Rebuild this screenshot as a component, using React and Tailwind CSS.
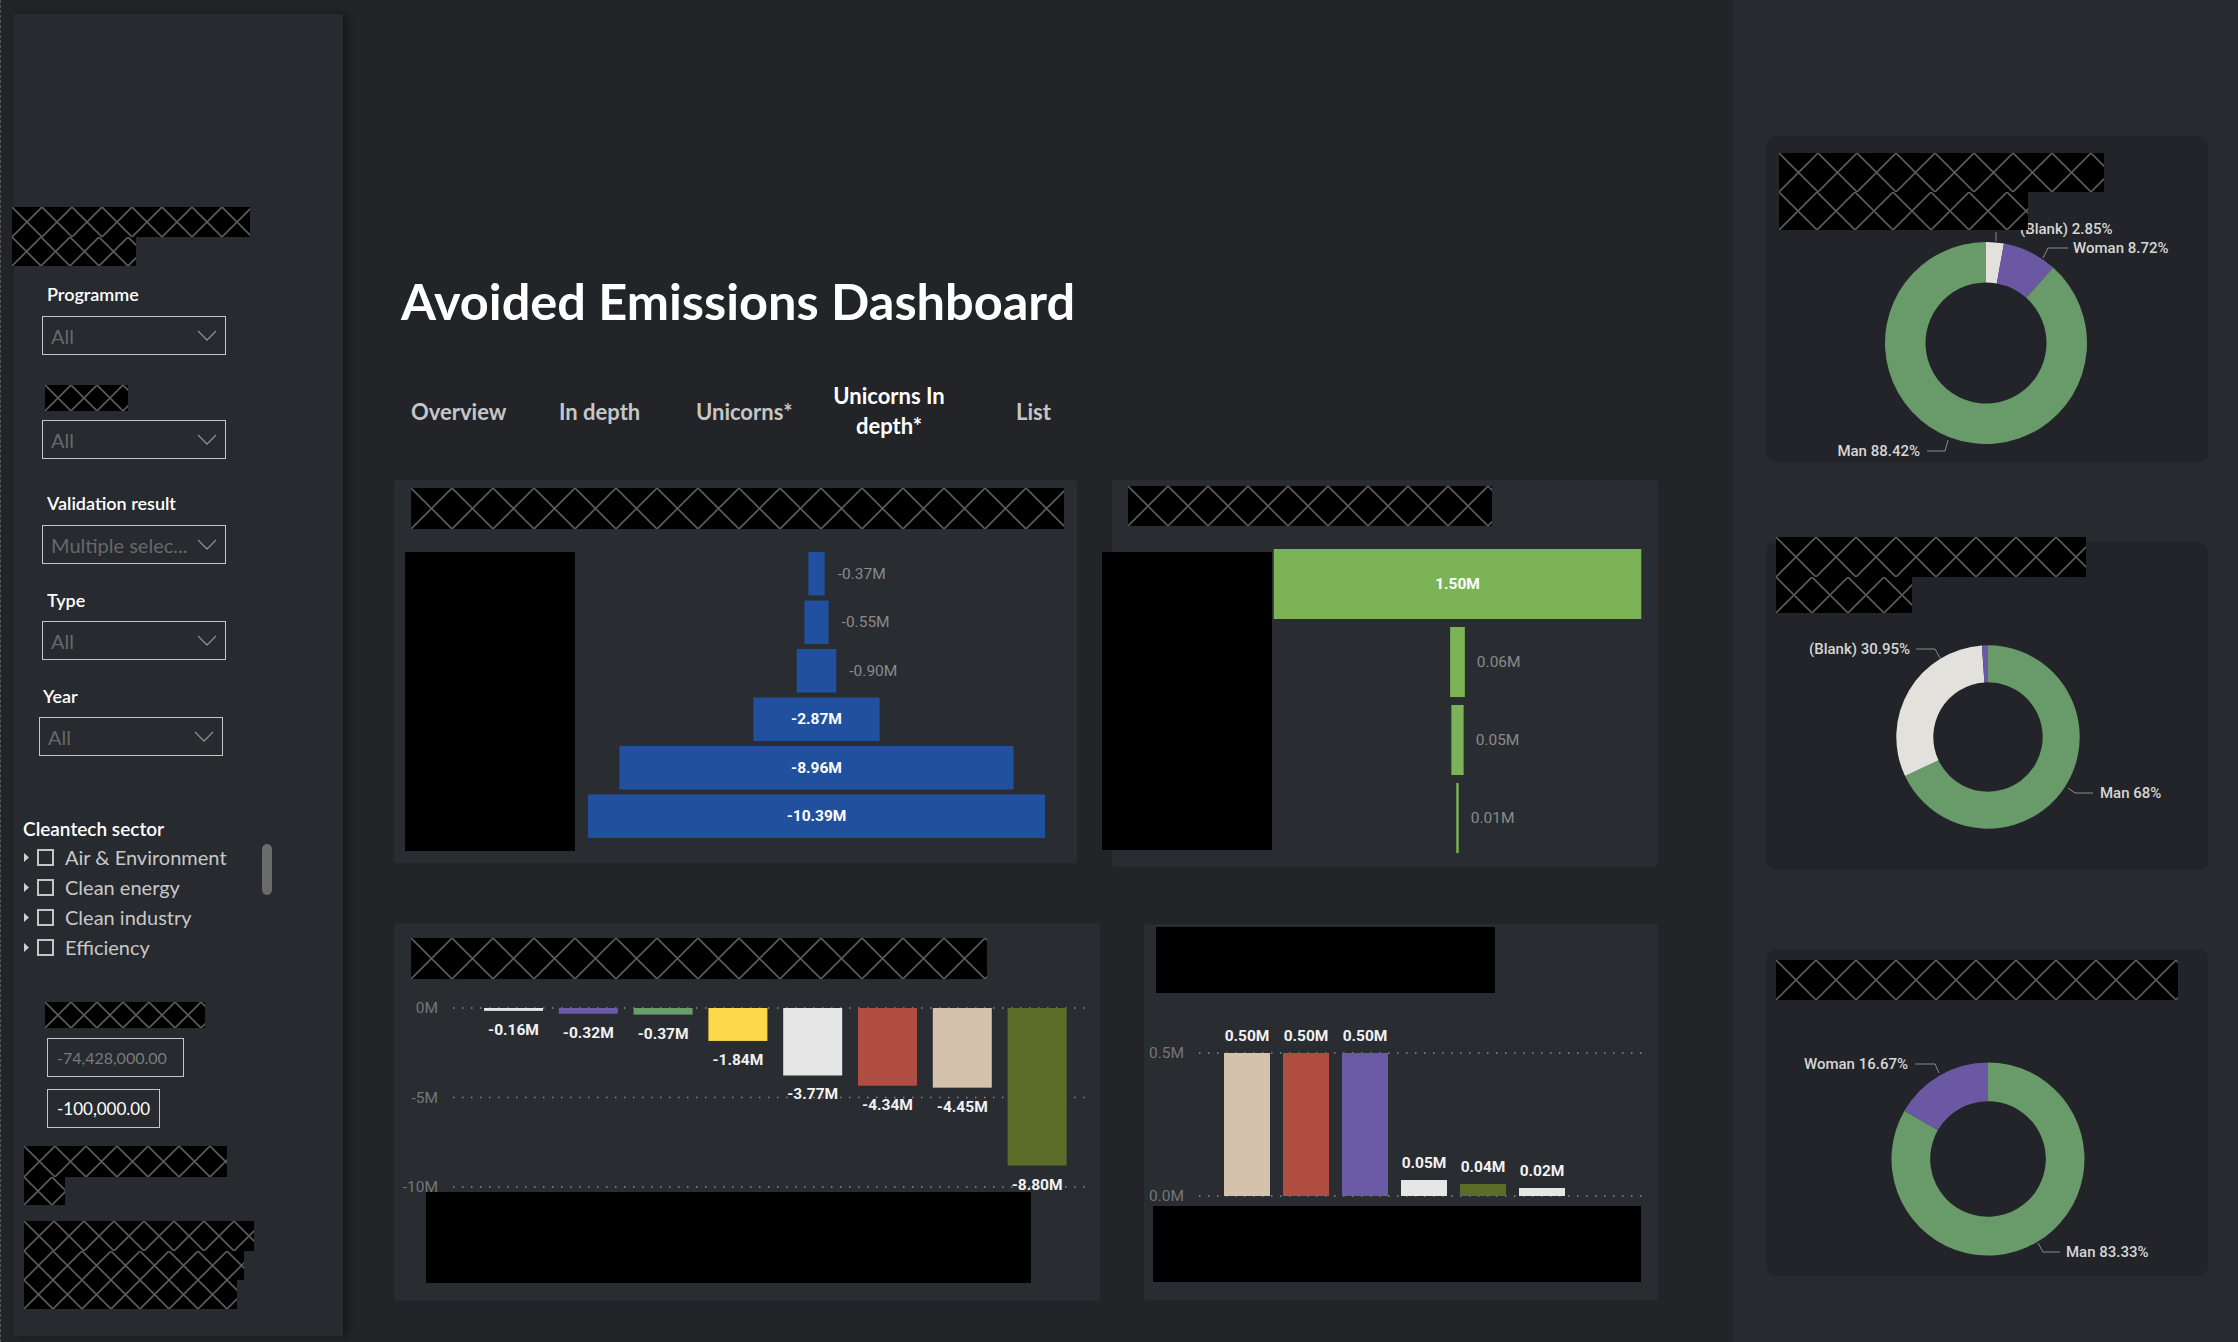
import { useId } from 'react';

// ── Redacted (hatched) block ────────────────────────────────────
const HatchRow = ({ w, h }) => {
  const id = 'h' + useId().replace(/[^a-zA-Z0-9]/g, '');
  return (
    <svg width={w} height={h} className="block">
      <defs>
        <pattern id={id} width={h} height={h} patternUnits="userSpaceOnUse">
          <path d={`M0 0L${h} ${h}M${h} 0L0 ${h}`} stroke="#5b5b5b" strokeWidth="1.6" />
        </pattern>
      </defs>
      <rect width={w} height={h} fill="#000" />
      <rect width={w} height={h} fill={`url(#${id})`} />
    </svg>
  );
};

const Hatch = ({ rows, className = '' }) => (
  <div className={`relative z-10 ${className}`}>
    {rows.map(([w, h], i) => <HatchRow key={i} w={w} h={h} />)}
  </div>
);

// ── Slicers ─────────────────────────────────────────────────────
const Dropdown = ({ text, className = '' }) => (
  <div className={`h-[39px] w-[184px] border-[1.5px] border-[#c6c6c6] flex items-center justify-between pl-[8px] pr-[8px] ${className}`}>
    <span className="text-[20px] leading-none text-[#686868]">{text}</span>
    <svg width="20" height="11" viewBox="0 0 20 11">
      <path d="M1 1l9 9 9-9" fill="none" stroke="#8c8c8c" strokeWidth="1.3" />
    </svg>
  </div>
);

const Label = ({ children, className = '' }) => (
  <div className={`h-[24px] leading-[24px] text-[18px] font-semibold text-white ${className}`}>{children}</div>
);

const TreeItem = ({ text }) => (
  <div className="h-[30px] flex items-center">
    <svg width="6" height="9" viewBox="0 0 6 9"><path d="M0 0l5 4.5L0 9z" fill="#cfcfcf" /></svg>
    <div className="ml-[7px] w-[17px] h-[17px] border-2 border-[#c4c4c4]" />
    <span className="ml-[11px] text-[20px] leading-none text-[#c8c8c8]">{text}</span>
  </div>
);

const Sidebar = () => (
  <aside className="relative z-10 w-[329px] h-[1322px] mt-[14px] shrink-0 bg-[#272a2f] shadow-[5px_0_8px_rgba(0,0,0,0.35)] pt-[193px] flex flex-col items-start">
    <Hatch className="-ml-[2px]" rows={[[238, 30], [124, 29]]} />
    <Label className="mt-[16px] ml-[33px]">Programme</Label>
    <Dropdown className="mt-[10px] ml-[28px]" text="All" />
    <Hatch className="mt-[30px] ml-[31px]" rows={[[83, 26]]} />
    <Dropdown className="mt-[9px] ml-[28px]" text="All" />
    <Label className="mt-[32px] ml-[33px]">Validation result</Label>
    <Dropdown className="mt-[10px] ml-[28px]" text="Multiple selec..." />
    <Label className="mt-[24px] ml-[33px]">Type</Label>
    <Dropdown className="mt-[9px] ml-[28px]" text="All" />
    <Label className="mt-[24px] ml-[29px]">Year</Label>
    <Dropdown className="mt-[9px] ml-[25px]" text="All" />

    <div className="mt-[61px] ml-[9px] h-[24px] leading-[24px] text-[19px] font-semibold text-white">Cleantech sector</div>
    <div className="mt-[1px] ml-[10px] flex items-start">
      <div className="w-[238px]">
        <TreeItem text="Air & Environment" />
        <TreeItem text="Clean energy" />
        <TreeItem text="Clean industry" />
        <TreeItem text="Efficiency" />
      </div>
      <div className="mt-[2px] w-[10px] h-[51px] rounded-full bg-[#6b6b6b]" />
    </div>

    <Hatch className="mt-[40px] ml-[31px]" rows={[[160, 26]]} />
    <div className="mt-[10px] ml-[33px] h-[39px] w-[137px] border-[1.5px] border-[#c6c6c6] flex items-center pl-[9px] text-[16px] text-[#7a7a7a]">-74,428,000.00</div>
    <div className="mt-[12px] ml-[33px] h-[39px] w-[113px] border-[1.5px] border-[#c6c6c6] flex items-center pl-[9px] text-[17px] text-white">-100,000.00</div>
    <Hatch className="mt-[18px] ml-[10px]" rows={[[203, 31], [41, 28]]} />
    <Hatch className="mt-[16px] ml-[10px]" rows={[[230, 30], [220, 29], [213, 29]]} />
  </aside>
);

// ── Charts ──────────────────────────────────────────────────────
const CHART_FONT = 'Roboto, "Liberation Sans", sans-serif';

const FunnelChart = () => {
  const rows = [
    [0.37, '-0.37M'], [0.55, '-0.55M'], [0.90, '-0.90M'],
    [2.87, '-2.87M', true], [8.96, '-8.96M', true], [10.39, '-10.39M', true],
  ];
  const cx = 241.5;
  return (
    <svg width="502" height="299" fontFamily={CHART_FONT} className="block">
      {rows.map(([v, label, inside], i) => {
        const w = v * 44, y = i * 48.5, h = 43.5;
        return (
          <g key={i}>
            <rect x={cx - w / 2} y={y} width={w} height={h} fill="#21509e" />
            {inside ? (
              <text x={cx} y={y + h / 2} textAnchor="middle" dominantBaseline="central" fill="#fff" fontSize="15.5" fontWeight="700">{label}</text>
            ) : (
              <text x={cx + w / 2 + 13} y={y + h / 2} dominantBaseline="central" fill="#8a8a8a" fontSize="15.5">{label}</text>
            )}
          </g>
        );
      })}
    </svg>
  );
};

const GreenBars = () => {
  const rows = [[1.5, '1.50M', true], [0.06, '0.06M'], [0.05, '0.05M'], [0.01, '0.01M']];
  const cx = 185.5;
  return (
    <svg width="386" height="306" fontFamily={CHART_FONT} className="block">
      {rows.map(([v, label, inside], i) => {
        const w = v * 245, y = i * 78, h = 70;
        return (
          <g key={i}>
            <rect x={cx - w / 2} y={y} width={w} height={h} fill="#7cb356" />
            {inside ? (
              <text x={cx} y={y + h / 2} textAnchor="middle" dominantBaseline="central" fill="#fff" fontSize="15.5" fontWeight="700">{label}</text>
            ) : (
              <text x={cx + w / 2 + 12} y={y + h / 2} dominantBaseline="central" fill="#8a8a8a" fontSize="15.5">{label}</text>
            )}
          </g>
        );
      })}
    </svg>
  );
};

const NegativeColumns = () => {
  const data = [
    [0.16, '-0.16M', '#e6e6e6'], [0.32, '-0.32M', '#6b5aa6'], [0.37, '-0.37M', '#6a9c6b'],
    [1.84, '-1.84M', '#fbd94a'], [3.77, '-3.77M', '#e6e6e6'], [4.34, '-4.34M', '#b04e44'],
    [4.45, '-4.45M', '#d4c2ad'], [8.80, '-8.80M', '#5a6e29'],
  ];
  const grid = [[15, '0M'], [104.5, '-5M'], [194, '-10M']];
  return (
    <svg width="706" height="199" fontFamily={CHART_FONT} overflow="visible" className="block">
      {grid.map(([y, t]) => (
        <g key={t}>
          <line x1="59" x2="698" y1={y} y2={y} stroke="#8a8a8a" strokeWidth="1.5" strokeDasharray="1.5 7.5" />
          <text x="44" y={y} textAnchor="end" dominantBaseline="central" fill="#767676" fontSize="15.5">{t}</text>
        </g>
      ))}
      {data.map(([v, label, c], i) => {
        const x = 90 + i * 74.8, h = v * 17.9;
        return (
          <g key={i}>
            <rect x={x} y={15} width="59" height={h} fill={c} />
            <text x={x + 29.5} y={15 + h + 19} textAnchor="middle" dominantBaseline="central" fill="#f2f2f2" fontSize="15.5" fontWeight="700">{label}</text>
          </g>
        );
      })}
    </svg>
  );
};

const PositiveColumns = () => {
  const data = [
    [143, '0.50M', '#d4c2ad'], [143, '0.50M', '#b04e44'], [143, '0.50M', '#6b5aa6'],
    [16, '0.05M', '#e6e6e6'], [12, '0.04M', '#5a6e29'], [8, '0.02M', '#e6e6e6'],
  ];
  const grid = [[46, '0.5M'], [189, '0.0M']];
  return (
    <svg width="514" height="199" fontFamily={CHART_FONT} overflow="visible" className="block">
      {grid.map(([y, t]) => (
        <g key={t}>
          <line x1="55" x2="500" y1={y} y2={y} stroke="#8a8a8a" strokeWidth="1.5" strokeDasharray="1.5 7.5" />
          <text x="40" y={y} textAnchor="end" dominantBaseline="central" fill="#767676" fontSize="15.5">{t}</text>
        </g>
      ))}
      {data.map(([h, label, c], i) => {
        const x = 80 + i * 59;
        return (
          <g key={i}>
            <rect x={x} y={189 - h} width="46" height={h} fill={c} />
            <text x={x + 23} y={189 - h - 17} textAnchor="middle" dominantBaseline="central" fill="#f2f2f2" fontSize="15.5" fontWeight="700">{label}</text>
          </g>
        );
      })}
    </svg>
  );
};

// ── Donut ───────────────────────────────────────────────────────
const ringPath = (cx, cy, r0, r1, a0, a1) => {
  const p = (r, a) => [cx + r * Math.sin(a * 2 * Math.PI), cy - r * Math.cos(a * 2 * Math.PI)];
  const large = a1 - a0 > 0.5 ? 1 : 0;
  const [x1, y1] = p(r1, a0), [x2, y2] = p(r1, a1), [x3, y3] = p(r0, a1), [x4, y4] = p(r0, a0);
  return `M${x1} ${y1}A${r1} ${r1} 0 ${large} 1 ${x2} ${y2}L${x3} ${y3}A${r0} ${r0} 0 ${large} 0 ${x4} ${y4}Z`;
};

const COLORS = { man: '#689b69', woman: '#6b58a4', blank: '#e3e1dc' };

const Donut = ({ height, cx, cy, r0, r1, segments, labels }) => (
  <svg width="442" height={height} fontFamily={CHART_FONT} overflow="visible" className="block">
    {segments.map(([a0, a1, c], i) => (
      <path key={i} d={ringPath(cx, cy, r0, r1, a0, a1)} fill={COLORS[c]} />
    ))}
    {labels.map(([x, y, anchor, text, leader], i) => (
      <g key={i}>
        <path d={leader} fill="none" stroke="#8a8a8a" strokeWidth="1" />
        <text x={x} y={y} textAnchor={anchor} dominantBaseline="central" fill="#d6d6d6" fontSize="15" fontWeight="500">{text}</text>
      </g>
    ))}
  </svg>
);

// ── App ─────────────────────────────────────────────────────────
const App = () => (
  <div className="w-[2238px] h-[1342px] flex bg-[#222428] overflow-hidden font-[Lato,'Liberation_Sans',sans-serif]">
    <div className="w-[14px] shrink-0 border-l border-dashed border-[#575757]" />
    <Sidebar />

    {/* ── Main canvas ─────────────────────────────────────── */}
    <main className="w-[1390px] shrink-0 pl-[51px] flex flex-col">
      <h1 className="mt-[272px] ml-[7px] text-[50.5px] leading-[58px] font-bold text-white">Avoided Emissions Dashboard</h1>

      <nav className="mt-[49px] h-[64px] pl-[17px] flex items-center text-[22px] font-bold text-[#c6c6c6]">
        <span className="w-[148px]">Overview</span>
        <span className="w-[137px]">In depth</span>
        <span className="w-[134px]">Unicorns*</span>
        <span className="w-[118px] text-center leading-[30px] text-white">Unicorns In<br />depth*</span>
        <span className="ml-[68px]">List</span>
      </nav>

      <div className="mt-[37px] flex items-start">
        <section className="w-[683px] h-[383px] rounded-[4px] bg-[#292c31] flex flex-col">
          <Hatch className="mt-[8px] ml-[17px]" rows={[[653, 41]]} />
          <div className="mt-[23px] flex">
            <div className="ml-[11px] w-[170px] h-[299px] bg-black" />
            <FunnelChart />
          </div>
        </section>
        <section className="ml-[35px] w-[546px] h-[387px] rounded-[4px] bg-[#292c31] flex flex-col">
          <Hatch className="mt-[6px] ml-[16px]" rows={[[364, 40]]} />
          <div className="mt-[23px] flex items-start">
            <div className="mt-[3px] -ml-[10px] w-[170px] h-[298px] bg-black" />
            <GreenBars />
          </div>
        </section>
      </div>

      <div className="mt-[56px] flex items-start">
        <section className="w-[706px] h-[378px] rounded-[4px] bg-[#292c31] flex flex-col">
          <Hatch className="mt-[15px] ml-[17px]" rows={[[576, 41]]} />
          <div className="mt-[14px]"><NegativeColumns /></div>
          <div className="relative ml-[32px] w-[605px] h-[91px] bg-black" />
        </section>
        <section className="ml-[44px] mt-[1px] w-[514px] h-[376px] rounded-[4px] bg-[#292c31] flex flex-col">
          <div className="mt-[3px] ml-[12px] w-[339px] h-[66px] bg-black" />
          <div className="mt-[14px]"><PositiveColumns /></div>
          <div className="relative ml-[9px] w-[488px] h-[76px] bg-black" />
        </section>
      </div>
    </main>

    {/* ── Right column: gender donuts ─────────────────────── */}
    <div className="w-[505px] shrink-0 bg-[#272a2f] pl-[33px] pt-[136px] flex flex-col">
      <section className="w-[442px] h-[327px] rounded-[10px] bg-[#222429] flex flex-col">
        <Hatch className="mt-[17px] ml-[13px]" rows={[[325, 39], [249, 38]]} />
        <Donut
          height={233} cx={220} cy={113} r0={60.5} r1={101}
          segments={[[0, 0.0285, 'blank'], [0.0285, 0.1157, 'woman'], [0.1157, 1, 'man']]}
          labels={[
            [254, -1, 'start', '(Blank) 2.85%', 'M230 2L230 11'],
            [307, 18, 'start', 'Woman 8.72%', 'M277 28L282 18L302 18'],
            [154, 221, 'end', 'Man 88.42%', 'M161 221L179 221L182 210'],
          ]}
        />
      </section>

      <section className="mt-[79px] w-[442px] h-[328px] rounded-[10px] bg-[#222429] flex flex-col">
        <Hatch className="-mt-[5px] ml-[10px]" rows={[[310, 40], [136, 36]]} />
        <Donut
          height={257} cx={222} cy={124} r0={54.7} r1={91.7}
          segments={[[0, 0.68, 'man'], [0.68, 0.9895, 'blank'], [0.9895, 1, 'woman']]}
          labels={[
            [144, 36, 'end', '(Blank) 30.95%', 'M150 36L169 36L174 45'],
            [334, 180, 'start', 'Man 68%', 'M302 175L309 180L327 180'],
          ]}
        />
      </section>

      <section className="mt-[79px] w-[442px] h-[327px] rounded-[10px] bg-[#222429] flex flex-col">
        <Hatch className="mt-[11px] ml-[10px]" rows={[[402, 40]]} />
        <Donut
          height={276} cx={222} cy={159} r0={57.8} r1={96.5}
          segments={[[0, 0.8333, 'man'], [0.8333, 1, 'woman']]}
          labels={[
            [142, 64, 'end', 'Woman 16.67%', 'M149 64L169 64L173 73'],
            [300, 252, 'start', 'Man 83.33%', 'M272 243L277 252L294 252'],
          ]}
        />
      </section>
    </div>
  </div>
);

export default App;
